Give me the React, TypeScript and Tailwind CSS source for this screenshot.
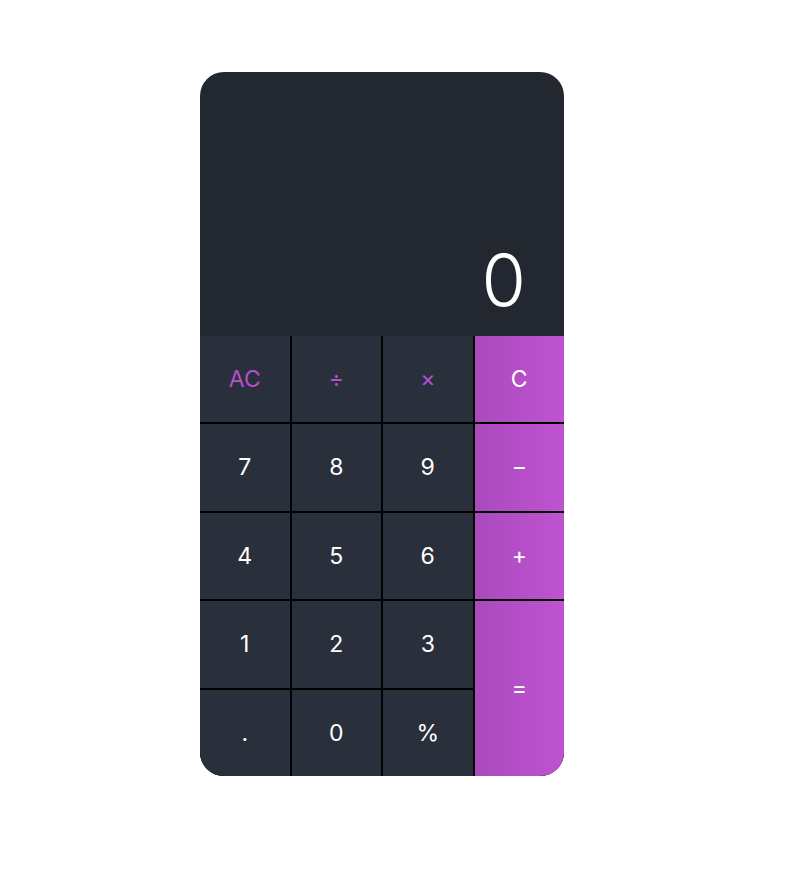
import React from "react";

type Key = { label: string; kind: "num" | "op" | "accent"; span?: boolean };

const keys: Key[] = [
  { label: "AC", kind: "op" },
  { label: "÷", kind: "op" },
  { label: "×", kind: "op" },
  { label: "C", kind: "accent" },
  { label: "7", kind: "num" },
  { label: "8", kind: "num" },
  { label: "9", kind: "num" },
  { label: "−", kind: "accent" },
  { label: "4", kind: "num" },
  { label: "5", kind: "num" },
  { label: "6", kind: "num" },
  { label: "+", kind: "accent" },
  { label: "1", kind: "num" },
  { label: "2", kind: "num" },
  { label: "3", kind: "num" },
  { label: "=", kind: "accent", span: true },
  { label: ".", kind: "num" },
  { label: "0", kind: "num" },
  { label: "%", kind: "num" },
];

export default function App() {
  return (
    <div className="min-h-[887px] bg-white pl-[200px] pt-[72px]" style={{ fontFamily: "Inter, 'Noto Sans', sans-serif" }}>
      <div className="flex h-[704px] w-[364px] flex-col overflow-hidden rounded-3xl bg-[#23272f]">
        <div className="flex h-[264px] items-end justify-end pb-[20px] pr-[38px]">
          <span className="text-[72px] font-light leading-none text-white">0</span>
        </div>
        <div className="grid flex-1 grid-cols-4 grid-rows-5 gap-[2px] bg-black">
          {keys.map((k, i) => {
            const base = "flex items-center justify-center text-[23px] font-normal";
            const cls =
              k.kind === "accent"
                ? `${base} bg-linear-to-r from-[#aa4abd] to-[#bf53d1] text-white`
                : k.kind === "op"
                ? `${base} bg-[#292f3b] text-[#b54fcc]`
                : `${base} bg-[#292f3b] text-white`;
            return (
              <div key={i} className={`${cls} ${k.span ? "row-span-2" : ""}`}>
                {k.label}
              </div>
            );
          })}
        </div>
      </div>
    </div>
  );
}
